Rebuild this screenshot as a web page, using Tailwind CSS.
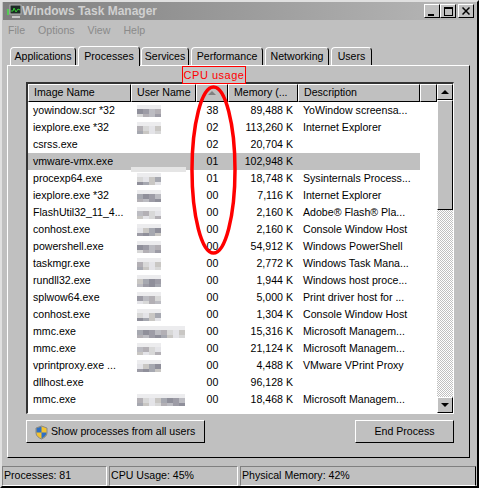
<!DOCTYPE html>
<html lang="en">
<head>
  <meta charset="UTF-8">
  <script src="https://cdn.jsdelivr.net/npm/@tailwindcss/browser@4"></script>
  <title>Windows Task Manager</title>
</head>
<body class="bg-[#c0c0c0] overflow-hidden">
  <div class="relative w-[479px] h-[488px] flex flex-col bg-[#c0c0c0] text-[10.6px] text-black font-['Liberation_Sans',sans-serif] border-t-2 border-l-2 border-t-[#e0e0e0] border-l-[#e0e0e0] border-b-2 border-b-black border-r-2 border-r-black">
    <!-- title bar -->
    <div class="h-[18px] mx-px flex items-center bg-gradient-to-r from-[#7f7f7f] to-[#b8b8b8] pl-1 pr-[2px]">
      <svg width="15" height="15" viewBox="0 0 15 15" class="shrink-0">
        <rect x="0" y="5" width="2" height="6" fill="#5c5"/>
        <rect x="3" y="1" width="11" height="9" fill="#1c2a24" stroke="#b5b5b5"/>
        <path d="M4 7 L6 7 L7 4 L9 8 L11 5 L13 6" fill="none" stroke="#3c3"/>
        <rect x="5" y="12" width="8" height="2" fill="#c8c8c8"/>
      </svg>
      <span class="font-bold text-[12px] text-[#d0d0d0]">Windows Task Manager</span>
      <div class="ml-auto flex">
        <button class="w-4 h-[14px] bg-[#c0c0c0] border border-t-white border-l-white border-r-black border-b-black flex items-end justify-start pl-[3px] pb-px"><span class="block w-[6px] h-[2px] bg-black"></span></button>
        <button class="w-4 h-[14px] bg-[#c0c0c0] border border-t-white border-l-white border-r-black border-b-black flex items-center justify-center"><span class="block w-[9px] h-[9px] border border-t-2 border-black"></span></button>
        <button class="w-4 h-[14px] ml-0.5 bg-[#c0c0c0] border border-t-white border-l-white border-r-black border-b-black flex items-center justify-center">
          <svg width="8" height="8" viewBox="0 0 8 8"><path d="M0.5 0.5 L7.5 7.5 M7.5 0.5 L0.5 7.5" stroke="#000" stroke-width="1.5"/></svg>
        </button>
      </div>
    </div>
    <!-- menu -->
    <div class="h-[20px] flex items-center gap-[13px] pl-[6px] pt-px text-[#8a8a8a]">
      <span>File</span><span>Options</span><span>View</span><span>Help</span>
    </div>
    <!-- tabs -->
    <div class="flex items-end h-[25px] pl-[8px]">
      <div class="w-[66px] h-[18px] flex items-center justify-center border-t border-l border-white border-r border-r-black rounded-t-sm">Applications</div>
      <div class="w-[62px] h-[20px] ml-[2px] flex items-center justify-center border-t border-l border-white border-r border-r-black rounded-t-sm -mb-px z-10 bg-[#c0c0c0]">Processes</div>
      <div class="w-[48px] h-[18px] ml-px flex items-center justify-center border-t border-l border-white border-r border-r-black rounded-t-sm">Services</div>
      <div class="w-[72px] h-[18px] ml-[2px] flex items-center justify-center border-t border-l border-white border-r border-r-black rounded-t-sm">Performance</div>
      <div class="w-[64px] h-[18px] ml-[2px] flex items-center justify-center border-t border-l border-white border-r border-r-black rounded-t-sm">Networking</div>
      <div class="w-[41px] h-[18px] ml-[2px] flex items-center justify-center border-t border-l border-white border-r border-r-black rounded-t-sm">Users</div>
    </div>
    <!-- panel -->
    <div class="w-[463px] h-[393px] ml-[5px] border border-t-white border-l-white border-r-black border-b-black pl-[18px] pt-[16px]">
      <div class="w-[428px] h-[332px] flex bg-white border-t-2 border-l-2 border-t-[#333] border-l-[#333] border-b border-r border-b-white border-r-white overflow-hidden">
        <div class="w-[409px] flex flex-col min-h-0">
          <div class="flex h-[18px] shrink-0 bg-[#c0c0c0]">
            <div class="w-[103px] pl-[5px] flex items-center border border-t-white border-l-white border-r-black border-b-black">Image Name</div>
            <div class="w-[65px] pl-[5px] flex items-center border border-t-white border-l-white border-r-black border-b-black">User Name</div>
            <div class="w-[32px] flex items-center justify-center border border-t-white border-l-white border-r-black border-b-black"><span class="w-0 h-0 border-x-[4px] border-x-transparent border-b-[4px] border-b-[#808080]"></span></div>
            <div class="w-[70px] pl-[5px] flex items-center border border-t-white border-l-white border-r-black border-b-black">Memory (...</div>
            <div class="w-[122px] pl-[5px] flex items-center border border-t-white border-l-white border-r-black border-b-black">Description</div>
            <div class="flex-1 border border-t-white border-l-white border-r-black border-b-black"></div>
          </div>
          <div id="rows" class="w-[392px] flex-1 overflow-hidden"></div>
        </div>
        <!-- scrollbar -->
        <div class="w-[16px] flex flex-col bg-[repeating-conic-gradient(#c0c0c0_0_25%,#fff_0_50%)] bg-[length:2px_2px]">
          <div class="h-[16px] shrink-0 bg-[#c0c0c0] border border-t-white border-l-white border-r-black border-b-black flex items-center justify-center"><span class="w-0 h-0 border-x-[4px] border-x-transparent border-b-[4px] border-b-black"></span></div>
          <div class="h-[110px] shrink-0 bg-[#c0c0c0] border border-t-white border-l-white border-r-black border-b-black"></div>
          <div class="flex-1"></div>
          <div class="h-[16px] shrink-0 bg-[#c0c0c0] border border-t-white border-l-white border-r-black border-b-black flex items-center justify-center"><span class="w-0 h-0 border-x-[4px] border-x-transparent border-t-[4px] border-t-black"></span></div>
        </div>
      </div>
      <div class="flex justify-between mt-[6px] w-[428px]">
        <button class="w-[179px] h-[23px] flex items-center pl-[7px] gap-[2px] pt-px bg-[#c0c0c0] border border-t-white border-l-white border-r-black border-b-black">
          <svg width="15" height="15" viewBox="0 0 15 15"><path d="M7.5 1 L13 3 V8 C13 11 10 13 7.5 14 C5 13 2 11 2 8 V3 Z" fill="#f2c230" stroke="#888"/><path d="M7.5 1.5 V7.5 H2.5 V3.2 Z M7.5 7.5 H12.5 C12.5 10.5 10 12.5 7.5 13.5 Z" fill="#2f6fc4"/></svg>
          Show processes from all users
        </button>
        <button class="w-[99px] h-[23px] pt-px bg-[#c0c0c0] border border-t-white border-l-white border-r-black border-b-black">End Process</button>
      </div>
    </div>
    <!-- status bar -->
    <div class="flex mt-[8px] h-[20px] pr-[1px] gap-[2px]">
      <div class="w-[105px] flex items-center pl-px border border-t-[#808080] border-l-[#808080] border-b-white border-r-white">Processes: 81</div>
      <div class="w-[129px] flex items-center pl-px border border-t-[#808080] border-l-[#808080] border-b-white border-r-white">CPU Usage: 45%</div>
      <div class="flex-1 flex items-center pl-px border border-t-[#808080] border-l-[#808080] border-b-white">Physical Memory: 42%</div>
    </div>
    <!-- annotation -->
    <div class="absolute left-[180px] top-[64px] w-[64px] h-[18px] border border-[#f00] bg-[#c6c6c6] text-[11px] text-[#f00] text-center leading-[16px] tracking-[0.5px]">CPU usage</div>
    <svg class="absolute left-[186px] top-[82px]" width="52" height="172"><ellipse cx="25.5" cy="86" rx="21.5" ry="83" fill="none" stroke="#f00" stroke-width="3.5"/></svg>
  </div>
  <script>
    const processes = [
      ['yowindow.scr *32', 1, '38', '89,488 K', 'YoWindow screensa...'],
      ['iexplore.exe *32', 1, '02', '113,260 K', 'Internet Explorer'],
      ['csrss.exe', 0, '02', '20,704 K', ''],
      ['vmware-vmx.exe', 0, '01', '102,948 K', ''],
      ['procexp64.exe', 1, '01', '18,748 K', 'Sysinternals Process...'],
      ['iexplore.exe *32', 1, '00', '7,116 K', 'Internet Explorer'],
      ['FlashUtil32_11_4...', 1, '00', '2,160 K', 'Adobe® Flash® Pla...'],
      ['conhost.exe', 1, '00', '2,160 K', 'Console Window Host'],
      ['powershell.exe', 1, '00', '54,912 K', 'Windows PowerShell'],
      ['taskmgr.exe', 1, '00', '2,772 K', 'Windows Task Mana...'],
      ['rundll32.exe', 1, '00', '1,944 K', 'Windows host proce...'],
      ['splwow64.exe', 1, '00', '5,000 K', 'Print driver host for ...'],
      ['conhost.exe', 1, '00', '1,304 K', 'Console Window Host'],
      ['mmc.exe', 2, '00', '15,316 K', 'Microsoft Managem...'],
      ['mmc.exe', 1, '00', '21,124 K', 'Microsoft Managem...'],
      ['vprintproxy.exe ...', 1, '00', '4,488 K', 'VMware VPrint Proxy'],
      ['dllhost.exe', 0, '00', '96,128 K', ''],
      ['mmc.exe', 2, '00', '18,468 K', 'Microsoft Managem...']
    ];
    const shades = ['#8f8f9a', '#b3b0b5', '#c9c7c4', '#9d9ca6', '#d8d8d8', '#a6a8b0', '#bcbcc2', '#e4e4e8'];

    // blurred user name, drawn as a strip of coloured squares
    function blur(kind, seed) {
      if (!kind) return '';
      const count = kind === 2 ? 8 : 4;
      let out = '<svg width="' + (count * 6) + '" height="14" class="block">';
      for (let i = 0; i < count; i++) {
        out += '<rect x="' + (i * 6) + '" y="1" width="6" height="4" fill="#ececee"/>';
        out += '<rect x="' + (i * 6) + '" y="5" width="6" height="5" fill="' + shades[(seed + i * 3) % 8] + '"/>';
        out += '<rect x="' + (i * 6) + '" y="10" width="6" height="3" fill="' + shades[(seed + i * 5 + 4) % 8] + '"/>';
      }
      return out + '</svg>';
    }

    document.getElementById('rows').innerHTML = processes.map((p, i) => `
      <div class="relative flex h-[17px] items-center ${i === 3 ? 'bg-[#c0c0c0]' : ''}">
        ${i === 4 ? '<span class="absolute left-[103px] top-[-3px] w-[55px] h-[5px] bg-[#e5e5e5]"></span>' : ''}
        <div class="w-[103px] pl-[5px] whitespace-nowrap overflow-hidden">${p[0]}</div>
        <div class="w-[65px] pl-[6px]">${blur(p[1], i)}</div>
        <div class="w-[32px] text-center pl-px">${p[2]}</div>
        <div class="w-[70px] text-right pr-[5px] whitespace-nowrap">${p[3]}</div>
        <div class="w-[122px] pl-[5px] whitespace-nowrap overflow-hidden">${p[4]}</div>
      </div>`).join('');
  </script>
</body>
</html>
